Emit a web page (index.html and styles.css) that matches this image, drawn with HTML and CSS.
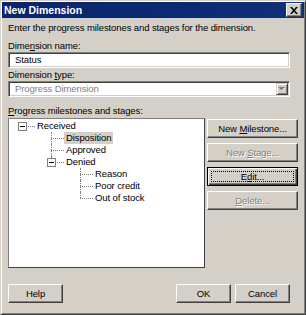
FILE: index.html
```html
<!DOCTYPE html>
<html>

<head>
    <meta charset="UTF-8">
    <title>New Dimension</title>
    <link rel="stylesheet" href="styles.css">
</head>

<body>
    <div class="dialog">
        <div class="titlebar">
            <span class="title">New Dimension</span>
            <span class="close">
                <svg width="8" height="7" viewBox="0 0 8 7">
                    <path d="M0 0h2l2 2.2L6 0h2L5 3.5 8 7H6L4 4.8 2 7H0l3-3.5z" fill="#000" />
                </svg>
            </span>
        </div>
        <div class="content">
            <p class="intro">Enter the progress milestones and stages for the dimension.</p>

            <label class="field-label">Dime<u>n</u>sion name:</label>
            <div class="textbox">Status</div>

            <label class="field-label tight">Dimension <u>t</u>ype:</label>
            <div class="combo">
                <span class="combo-text">Progress Dimension</span>
                <span class="combo-btn">
                    <svg width="8" height="5" viewBox="0 0 8 5">
                        <path d="M1 1h6L4 4z" fill="#fff" />
                        <path d="M0 0h7L3.5 3.5z" fill="#808080" />
                    </svg>
                </span>
            </div>

            <label class="field-label gap"><u>P</u>rogress milestones and stages:</label>
            <main class="main">
                <div class="tree">
                    <ul>
                        <li>
                            <div class="row"><span class="toggle"></span><span class="node-label">Received</span></div>
                            <ul>
                                <li>
                                    <div class="row"><span class="node-label selected">Disposition</span></div>
                                </li>
                                <li>
                                    <div class="row"><span class="node-label">Approved</span></div>
                                </li>
                                <li>
                                    <div class="row"><span class="toggle"></span><span class="node-label">Denied</span></div>
                                    <ul>
                                        <li>
                                            <div class="row"><span class="node-label">Reason</span></div>
                                        </li>
                                        <li>
                                            <div class="row"><span class="node-label">Poor credit</span></div>
                                        </li>
                                        <li>
                                            <div class="row"><span class="node-label">Out of stock</span></div>
                                        </li>
                                    </ul>
                                </li>
                            </ul>
                        </li>
                    </ul>
                </div>
                <aside class="side-buttons">
                    <button class="btn">New <u>M</u>ilestone...</button>
                    <button class="btn" disabled>New <u>S</u>tage...</button>
                    <button class="btn focused"><span class="focus-ring">E<u>d</u>it...</span></button>
                    <button class="btn" disabled><u>D</u>elete...</button>
                </aside>
            </main>

            <div class="footer">
                <button class="btn small">Help</button>
                <span class="spacer"></span>
                <button class="btn small">OK</button>
                <button class="btn small">Cancel</button>
            </div>
        </div>
    </div>
</body>

</html>
```

FILE: styles.css
```css
body {
    margin: 0;
    font-family: "Liberation Sans", sans-serif;
    font-size: 9.5px;
    letter-spacing: -0.1px;
    color: #000;
}

.dialog {
    width: 306px;
    height: 315px;
    box-sizing: border-box;
    background: #d4d0c8;
    border: 1px solid;
    border-color: #d4d0c8 #404040 #404040 #d4d0c8;
    box-shadow: inset 1px 1px #fff, inset -1px -1px #808080;
    padding: 1px;
}

.titlebar {
    height: 16px;
    background: linear-gradient(to right, #0a246a, #0f2f78);
    display: flex;
    align-items: center;
    justify-content: space-between;
    padding: 0 2px;
    color: #fff;
    font-weight: bold;
    font-size: 10.5px;
    letter-spacing: 0;
}

.close {
    width: 16px;
    height: 14px;
    box-sizing: border-box;
    background: #d4d0c8;
    border: 1px solid;
    border-color: #fff #404040 #404040 #fff;
    box-shadow: inset -1px -1px #808080;
    display: flex;
    align-items: center;
    justify-content: center;
}

.content {
    padding: 0 6px;
}

.intro {
    margin: 3px 0 0;
    line-height: 13px;
    white-space: nowrap;
}

.field-label {
    display: block;
    margin-top: 6px;
    line-height: 12px;
}

.field-label.tight {
    margin-top: 1px;
}

.field-label.gap {
    margin-top: 8px;
}

.textbox,
.combo {
    width: 282px;
    height: 16px;
    box-sizing: border-box;
    background: #fff;
    border: 1px solid;
    border-color: #808080 #fff #fff #808080;
    box-shadow: inset 1px 1px #404040, inset -1px -1px #d4d0c8;
}

.textbox {
    padding-left: 6px;
    line-height: 14px;
}

.combo {
    display: flex;
    padding: 1px;
}

.combo-text {
    flex: 1;
    color: #808080;
    padding-left: 5px;
    line-height: 12px;
}

.combo-btn {
    width: 12px;
    box-sizing: border-box;
    background: #d4d0c8;
    border: 1px solid;
    border-color: #d4d0c8 #404040 #404040 #d4d0c8;
    box-shadow: inset 1px 1px #fff, inset -1px -1px #808080;
    display: flex;
    align-items: center;
    justify-content: center;
}

.main {
    display: flex;
    gap: 2px;
    margin-top: 1px;
}

.tree {
    width: 197px;
    height: 150px;
    box-sizing: border-box;
    background: #fff;
    border: 1px solid #808080;
    border-color: #808080 #404040 #404040 #808080;
}

.tree ul {
    list-style: none;
    margin: 0;
    padding: 0 0 0 3px;
}

.tree>ul {
    padding: 1px 0 0 0;
}

.tree li {
    position: relative;
    padding-left: 26px;
}

.tree li::after {
    content: "";
    position: absolute;
    left: 13px;
    top: 6px;
    width: 13px;
    border-top: 1px dotted #808080;
}

.tree ul ul>li::before {
    content: "";
    position: absolute;
    left: 13px;
    top: 0;
    bottom: 0;
    border-left: 1px dotted #808080;
}

.tree ul ul>li:last-child::before {
    bottom: auto;
    height: 6px;
}

.row {
    height: 12px;
}

.toggle {
    position: absolute;
    left: 9px;
    top: 2px;
    width: 9px;
    height: 9px;
    box-sizing: border-box;
    border: 1px solid #808080;
    background: #fff;
    z-index: 1;
}

.toggle::before {
    content: "";
    position: absolute;
    left: 1px;
    top: 3px;
    width: 5px;
    height: 1px;
    background: #000;
}

.node-label {
    display: inline-block;
    vertical-align: top;
    padding: 0 2px;
    line-height: 12px;
}

.node-label.selected {
    background: #d4d0c8;
}

.side-buttons {
    width: 91px;
    display: flex;
    flex-direction: column;
    gap: 5px;
    padding-top: 1px;
}

.btn {
    height: 19px;
    padding: 0;
    font: inherit;
    letter-spacing: inherit;
    color: #000;
    background: #d4d0c8;
    border: 1px solid;
    border-color: #fff #404040 #404040 #fff;
    box-shadow: inset -1px -1px #808080;
}

.btn:disabled {
    color: #808080;
    text-shadow: 1px 1px #fff;
}

.btn.focused {
    border-color: #000;
    box-shadow: inset 1px 1px #fff, inset -1px -1px #404040, inset -2px -2px #808080;
    display: flex;
    padding: 3px;
}

.focus-ring {
    flex: 1;
    border: 1px dotted #000;
    line-height: 9px;
}

.footer {
    display: flex;
    gap: 4px;
    margin-top: 16px;
    padding-right: 8px;
}

.btn.small {
    width: 55px;
}

.spacer {
    flex: 1;
}
```
